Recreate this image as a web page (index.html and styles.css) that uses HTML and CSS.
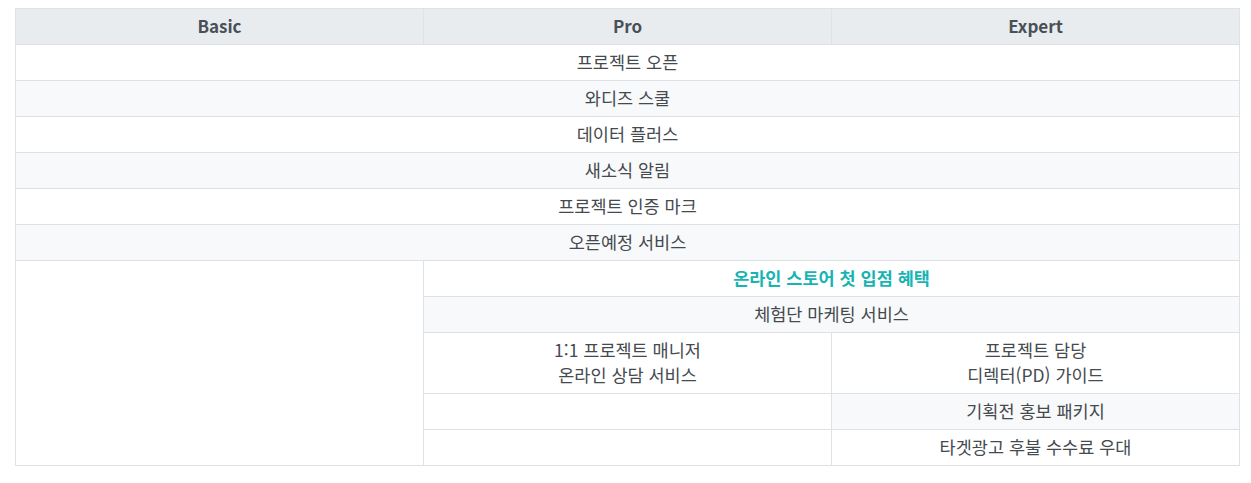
FILE: index.html
```html
<!DOCTYPE html>
<html lang="ko">
<head>
<meta charset="utf-8">
<link rel="stylesheet" href="styles.css">
</head>
<body>
<table class="plans">
  <colgroup><col class="c"><col class="c"><col class="c"></colgroup>
  <thead>
    <tr><th>Basic</th><th>Pro</th><th>Expert</th></tr>
  </thead>
  <tbody>
    <tr><td colspan="3">프로젝트 오픈</td></tr>
    <tr class="alt"><td colspan="3">와디즈 스쿨</td></tr>
    <tr><td colspan="3">데이터 플러스</td></tr>
    <tr class="alt"><td colspan="3">새소식 알림</td></tr>
    <tr><td colspan="3">프로젝트 인증 마크</td></tr>
    <tr class="alt"><td colspan="3">오픈예정 서비스</td></tr>
    <tr><td rowspan="5"></td><td colspan="2" class="hl">온라인 스토어 첫 입점 혜택</td></tr>
    <tr class="alt"><td colspan="2">체험단 마케팅 서비스</td></tr>
    <tr><td>1:1 프로젝트 매니저<br>온라인 상담 서비스</td><td>프로젝트 담당<br>디렉터(PD) 가이드</td></tr>
    <tr><td></td><td class="g">기획전 홍보 패키지</td></tr>
    <tr><td></td><td>타겟광고 후불 수수료 우대</td></tr>
  </tbody>
</table>
</body>
</html>
```
FILE: styles.css
```css
body {
  margin: 8px 11px 8px 15px;
  background: #fff;
  font-family: "Noto Sans CJK KR", "Noto Sans", sans-serif;
}
.plans {
  width: 100%;
  border-collapse: collapse;
  table-layout: fixed;
  font-size: 17.5px;
  color: #454a4f;
}
.plans th, .plans td {
  border: 1px solid #dee2e6;
  padding: 4px 8px 6px;
  line-height: 25px;
  text-align: center;
  font-weight: 400;
}
.plans th {
  background: #e9ecef;
  font-weight: 700;
  font-size: 17px;
  color: #495057;
}
.plans td { background: #fff; }
.plans tr.alt td, .plans td.g { background: #f8f9fa; }
.plans td.hl { color: #18b4b4; font-weight: 700; }
```
